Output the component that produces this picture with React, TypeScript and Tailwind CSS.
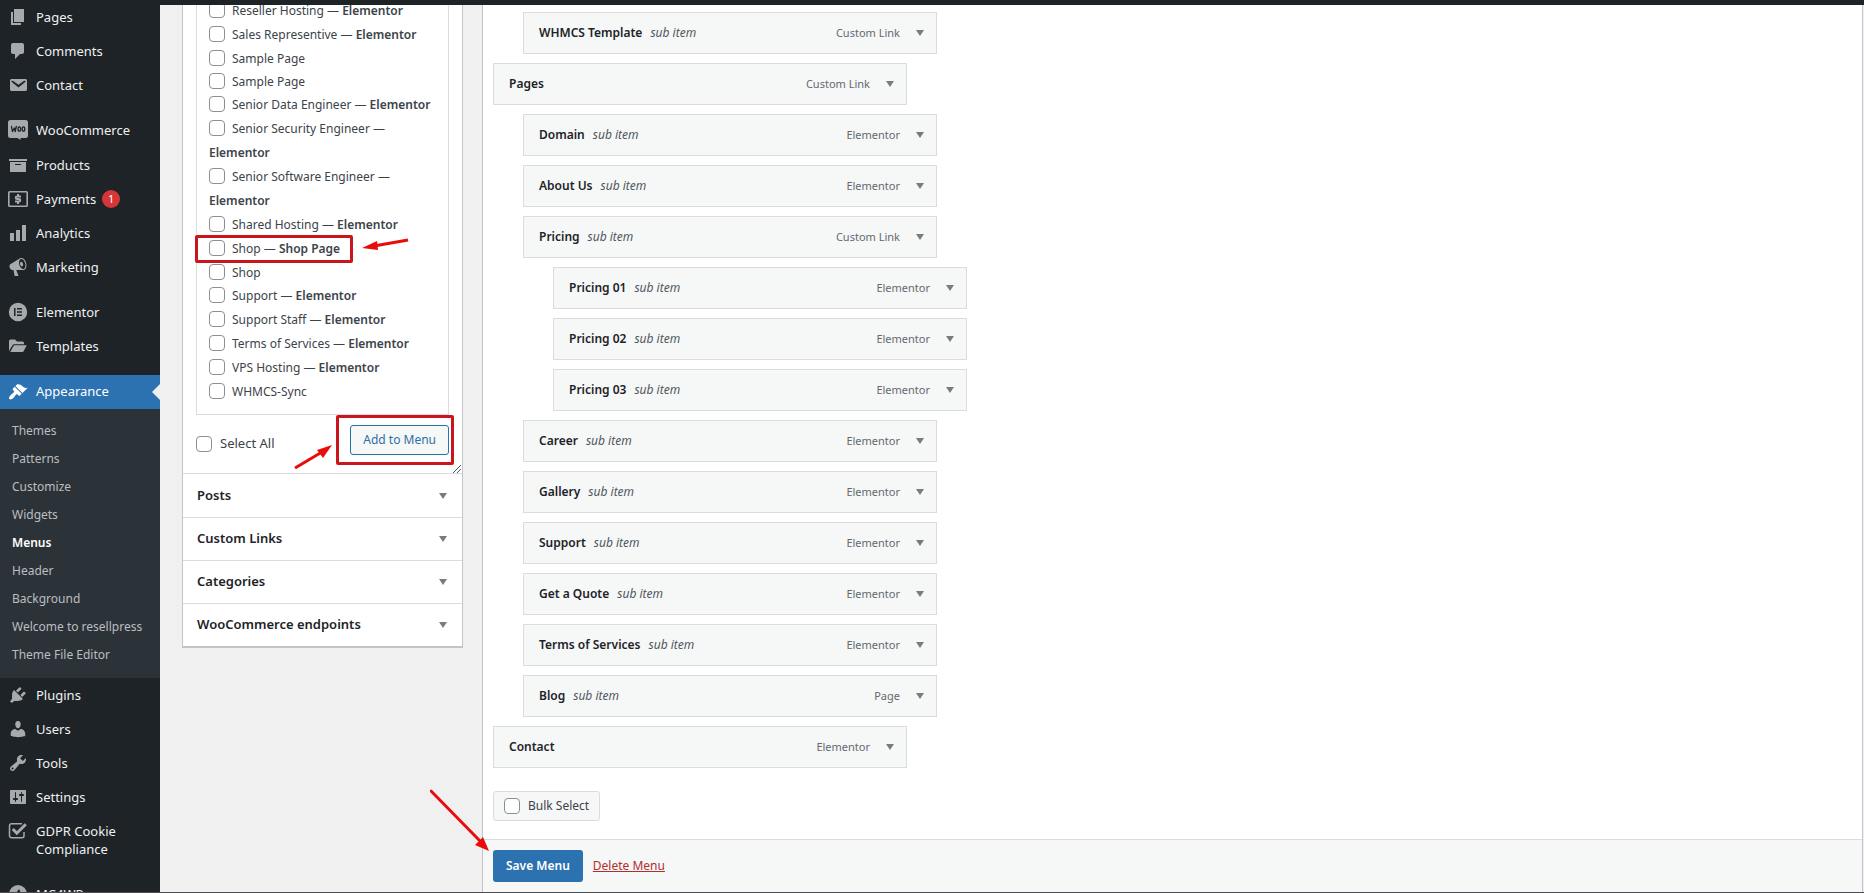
import React from 'react';

interface SidebarEntry {
  label: string;
  icon: React.ReactNode;
  badge?: number;
}

interface PageEntry {
  title: string;
  state?: string;
  marked?: boolean;
}

interface MenuEntry {
  title: string;
  type: string;
  depth: 0 | 1 | 2;
}

const Dashicon: React.FC<{ d: string }> = ({ d }) => (
  <svg viewBox="0 0 20 20" className="w-5 h-5" fill="currentColor" aria-hidden="true">
    <path d={d} />
  </svg>
);

const WooIcon = () => (
  <svg viewBox="0 0 20 20" className="w-5 h-5" aria-hidden="true">
    <path
      fill="currentColor"
      d="M2.500 0h15A2.500 2.500 0 0 1 20 2.500v13a2.500 2.500 0 0 1-2.500 2.500H12.500v2L9.500 18h-7A2.500 2.500 0 0 1 0 15.500v-13A2.500 2.500 0 0 1 2.500 0z"
    />
    <g fill="none" stroke="#1d2327" strokeWidth="1.300" strokeLinecap="round" strokeLinejoin="round">
      <path d="M3.500 6.500l.9 5 1.900-3.500.9 3.500 1.100-5" />
      <ellipse cx="11.300" cy="9" rx="1.300" ry="2.200" />
      <ellipse cx="15.500" cy="9" rx="1.300" ry="2.200" />
    </g>
  </svg>
);

const PaymentsIcon = () => (
  <svg viewBox="0 0 20 20" className="w-5 h-5" fill="none" stroke="currentColor" aria-hidden="true">
    <rect x="0.800" y="2.800" width="18.400" height="14.400" rx="0.800" strokeWidth="1.600" />
    <path strokeWidth="2" d="M13 7.500H9a1.250 1.250 0 0 0 0 2.500h2a1.250 1.250 0 0 1 0 2.500H7M10 5v2.500M10 12.500V15" />
  </svg>
);

const ElementorIcon = () => (
  <svg viewBox="0 0 20 20" className="w-5 h-5" aria-hidden="true">
    <circle cx="10" cy="10" r="9.200" fill="currentColor" />
    <path fill="#1d2327" d="M6 6h1.500v8H6zM9 6h5v1.500H9zM9 9.250h5v1.500H9zM9 12.500h5V14H9z" />
  </svg>
);

const FolderIcon = () => (
  <svg viewBox="0 0 20 20" className="w-5 h-5" fill="currentColor" aria-hidden="true">
    <path d="M1 5a1.500 1.500 0 0 1 1.500-1.500h4.500l2 2h5.500A1.500 1.500 0 0 1 16 7v1.300H6.200a2 2 0 0 0-1.700 1L1 15z" />
    <path d="M6.500 9.300h12.300l-3.200 6a1.500 1.500 0 0 1-1.300.8H2.200l3.300-6.200a1.200 1.200 0 0 1 1-.6z" />
  </svg>
);

const ConsentIcon = () => (
  <svg viewBox="0 0 20 20" className="w-5 h-5" fill="none" stroke="currentColor" aria-hidden="true">
    <path strokeWidth="1.500" d="M14 2.700H3.500A2 2 0 0 0 1.500 4.700v10a2 2 0 0 0 2 2h10.500a2 2 0 0 0 2-2V11" />
    <path strokeWidth="3" d="M4.800 8l4 4.200L17.800 3.200" />
  </svg>
);

const MailchimpIcon = () => (
  <svg viewBox="0 0 20 20" className="w-5 h-5" aria-hidden="true">
    <circle cx="10" cy="10" r="9" fill="currentColor" />
    <path fill="#1d2327" d="M11 5l2 4-3 6-2-6z" />
  </svg>
);

const contentEntries: SidebarEntry[] = [
  { label: 'Pages', icon: <Dashicon d="M6 15V2h10v13H6zm-1 1h8v2H3V5h2v11z" /> },
  {
    label: 'Comments',
    icon: <Dashicon d="M5 2h9c1.100 0 2 .9 2 2v7c0 1.100-.9 2-2 2h-2l-5 5v-5H5c-1.100 0-2-.9-2-2V4c0-1.100.9-2 2-2z" />,
  },
  {
    label: 'Contact',
    icon: (
      <Dashicon d="M3.870 4h13.250C18.370 4 19 4.590 19 5.790v8.420c0 1.190-.63 1.790-1.880 1.790H3.870c-1.250 0-1.880-.6-1.880-1.790V5.790c0-1.200.63-1.790 1.880-1.790zm6.620 8.600l6.740-5.530c.24-.2.43-.66.13-1.070-.29-.41-.82-.42-1.170-.17l-5.700 3.860L4.800 5.830c-.35-.25-.88-.24-1.170.17-.3.41-.11.87.13 1.070z" />
    ),
  },
];

const commerceEntries: SidebarEntry[] = [
  { label: 'Products', icon: <Dashicon d="M19 4v2H1V4h18zM2 7h16v10H2V7zm11 3V9H7v1h6z" /> },
  { label: 'Payments', icon: <PaymentsIcon />, badge: 1 },
  { label: 'Analytics', icon: <Dashicon d="M18 18V2h-4v16h4zm-6 0V7H8v11h4zm-6 0v-8H2v8h4z" /> },
  {
    label: 'Marketing',
    icon: (
      <Dashicon d="M18.150 5.940c.46 1.620.38 3.220-.02 4.480-.42 1.280-1.260 2.180-2.300 2.480-.16.06-.26.06-.4.06-.06.02-.12.02-.18.02-.06.02-.14.02-.22.02h-6.800l2.220 5.500c.02.14-.06.26-.14.34-.08.1-.24.16-.34.16H6.950c-.1 0-.26-.06-.34-.16-.08-.08-.16-.2-.14-.34l-1-5.500H4.250l-.02-.02c-.5.06-1.080-.18-1.540-.62s-.88-1.080-1.060-1.880c-.24-.8-.2-1.560-.02-2.200.18-.62.58-1.080 1.060-1.300l.02-.02 9-5.400c.1-.06.18-.1.24-.16.06-.04.14-.08.24-.12.16-.08.28-.12.5-.18 1.040-.3 2.240.1 3.220.98s1.840 2.240 2.260 3.860zm-2.580 5.980h-.02c.4-.1.74-.34 1.040-.7.58-.7.86-1.760.86-3.040 0-.64-.1-1.300-.28-1.980-.34-1.360-1.020-2.500-1.780-3.240s-1.680-1.100-2.460-.88c-.82.22-1.400.96-1.700 2-.32 1.040-.28 2.360.06 3.720.38 1.360 1 2.500 1.800 3.240.78.74 1.620 1.100 2.480.88zm-2.540-7.080c.22-.04.42-.02.62.04.38.16.76.48 1.020 1s.42 1.200.42 1.780c0 .3-.04.56-.12.8-.18.48-.44.84-.86.94-.34.1-.8-.06-1.140-.4s-.64-.86-.78-1.500c-.18-.62-.12-1.240.02-1.720s.48-.84.82-.94z" />
    ),
  },
];

const builderEntries: SidebarEntry[] = [
  { label: 'Elementor', icon: <ElementorIcon /> },
  { label: 'Templates', icon: <FolderIcon /> },
];

const appearanceLinks = [
  'Themes',
  'Patterns',
  'Customize',
  'Widgets',
  'Menus',
  'Header',
  'Background',
  'Welcome to resellpress',
  'Theme File Editor',
];

const adminEntries: SidebarEntry[] = [
  {
    label: 'Plugins',
    icon: (
      <Dashicon d="M13.110 4.360L9.870 7.600 8 5.730l3.240-3.240c.35-.34 1.050-.2 1.560.32.52.51.66 1.210.31 1.550zm-8 1.770l.91-1.120 9.010 9.010-1.190.84c-.71.71-2.630 1.160-3.820 1.160H6.140L4.900 17.260c-.59.59-1.540.59-2.120 0-.59-.58-.59-1.530 0-2.120l1.240-1.240v-3.880c0-1.130.4-3.190 1.090-3.890zm7.260 3.970l3.240-3.240c.34-.35 1.040-.21 1.550.31.52.51.66 1.210.31 1.550l-3.240 3.250z" />
    ),
  },
  {
    label: 'Users',
    icon: (
      <Dashicon d="M10 9.250c-2.270 0-2.730-3.440-2.730-3.440C7 4.020 7.820 2 9.970 2c2.160 0 2.980 2.020 2.710 3.810 0 0-.41 3.440-2.680 3.440zm0 2.570L12.720 10c2.390 0 4.520 2.330 4.520 4.530v2.490s-3.650 1.130-7.240 1.130c-3.650 0-7.240-1.130-7.240-1.130v-2.490c0-2.250 1.940-4.480 4.470-4.480z" />
    ),
  },
  {
    label: 'Tools',
    icon: (
      <Dashicon d="M16.680 9.770c-1.340 1.340-3.300 1.670-4.950.99l-5.410 6.520c-.99.99-2.590.99-3.580 0s-.99-2.590 0-3.570l6.520-5.420c-.68-1.650-.35-3.610.99-4.950 1.280-1.280 3.120-1.620 4.720-1.060l-2.890 2.890 2.820 2.820 2.860-2.870c.53 1.580.18 3.390-1.080 4.650zM3.810 16.210c.4.39 1.040.39 1.430 0 .4-.4.4-1.040 0-1.430-.39-.4-1.030-.4-1.430 0-.39.39-.39 1.030 0 1.430z" />
    ),
  },
  {
    label: 'Settings',
    icon: (
      <Dashicon d="M18 16V4c0-.55-.45-1-1-1H3c-.55 0-1 .45-1 1v12c0 .55.45 1 1 1h14c.55 0 1-.45 1-1zM8 11h1c.55 0 1 .45 1 1s-.45 1-1 1H8v1.500c0 .28-.22.5-.5.5s-.5-.22-.5-.5V13H6c-.55 0-1-.45-1-1s.45-1 1-1h1V5.500c0-.28.22-.5.5-.5s.5.22.5.5V11zm5-2h-1c-.55 0-1-.45-1-1s.45-1 1-1h1V5.500c0-.28.22-.5.5-.5s.5.22.5.5V7h1c.55 0 1 .45 1 1s-.45 1-1 1h-1v5.500c0 .28-.22.5-.5.5s-.5-.22-.5-.5V9z" />
    ),
  },
  { label: 'GDPR Cookie Compliance', icon: <ConsentIcon /> },
];

const pageEntries: PageEntry[] = [
  { title: 'Reseller Hosting', state: 'Elementor' },
  { title: 'Sales Representive', state: 'Elementor' },
  { title: 'Sample Page' },
  { title: 'Sample Page' },
  { title: 'Senior Data Engineer', state: 'Elementor' },
  { title: 'Senior Security Engineer', state: 'Elementor' },
  { title: 'Senior Software Engineer', state: 'Elementor' },
  { title: 'Shared Hosting', state: 'Elementor' },
  { title: 'Shop', state: 'Shop Page', marked: true },
  { title: 'Shop' },
  { title: 'Support', state: 'Elementor' },
  { title: 'Support Staff', state: 'Elementor' },
  { title: 'Terms of Services', state: 'Elementor' },
  { title: 'VPS Hosting', state: 'Elementor' },
  { title: 'WHMCS-Sync' },
];

const accordionTitles = ['Posts', 'Custom Links', 'Categories', 'WooCommerce endpoints'];

const menuEntries: MenuEntry[] = [
  { title: 'WHMCS Template', type: 'Custom Link', depth: 1 },
  { title: 'Pages', type: 'Custom Link', depth: 0 },
  { title: 'Domain', type: 'Elementor', depth: 1 },
  { title: 'About Us', type: 'Elementor', depth: 1 },
  { title: 'Pricing', type: 'Custom Link', depth: 1 },
  { title: 'Pricing 01', type: 'Elementor', depth: 2 },
  { title: 'Pricing 02', type: 'Elementor', depth: 2 },
  { title: 'Pricing 03', type: 'Elementor', depth: 2 },
  { title: 'Career', type: 'Elementor', depth: 1 },
  { title: 'Gallery', type: 'Elementor', depth: 1 },
  { title: 'Support', type: 'Elementor', depth: 1 },
  { title: 'Get a Quote', type: 'Elementor', depth: 1 },
  { title: 'Terms of Services', type: 'Elementor', depth: 1 },
  { title: 'Blog', type: 'Page', depth: 1 },
  { title: 'Contact', type: 'Elementor', depth: 0 },
];

const depthClass = {
  0: '',
  1: 'ml-[30px]',
  2: 'ml-[60px]',
};

const checkboxClass =
  'appearance-none shrink-0 w-4 h-4 bg-white border border-[#8c8f94] rounded-[4px] checked:bg-[#2271b1]';

const DownArrow = () => (
  <svg viewBox="0 0 8 6" className="w-2 h-1.5 shrink-0" fill="#787c82" aria-hidden="true">
    <path d="M0 0h8L4 6z" />
  </svg>
);

const SidebarItem: React.FC<{ entry: SidebarEntry }> = ({ entry }) => (
  <li>
    <a href="#" className="flex items-start min-h-[34px] py-2 pr-2 text-[13px] leading-[18px] text-[#f0f0f1]">
      <span className="flex justify-center items-center w-9 h-[18px] shrink-0 text-[#a7aaad]">{entry.icon}</span>
      <span>{entry.label}</span>
      {entry.badge && (
        <span className="flex items-center justify-center w-[18px] h-[18px] ml-1.5 rounded-full bg-[#d63638] text-[11px] text-white">
          {entry.badge}
        </span>
      )}
    </a>
  </li>
);

const SidebarGroup: React.FC<{ entries: SidebarEntry[]; className?: string }> = ({ entries, className = '' }) => (
  <ul className={className}>
    {entries.map((entry) => (
      <SidebarItem key={entry.label} entry={entry} />
    ))}
  </ul>
);

const Sidebar = () => (
  <nav className="w-40 shrink-0 bg-[#1d2327]">
    <SidebarGroup entries={contentEntries} />
    <SidebarGroup entries={[{ label: 'WooCommerce', icon: <WooIcon /> }]} className="mt-[11px] mb-px" />
    <SidebarGroup entries={commerceEntries} />
    <SidebarGroup entries={builderEntries} className="mt-[11px]" />

    <div className="mt-3">
      <a href="#" className="relative flex items-center h-[34px] bg-[#2c71b0] text-[13px] text-white">
        <span className="flex justify-center w-9">
          <Dashicon d="M14.480 11.060L7.410 3.990l1.500-1.500c.5-.56 2.300-.47 3.510.32 1.210.8 1.430 1.280 2.910 2.100 1.180.64 2.450 1.260 4.450.85zm-.71.71L6.700 4.700 4.930 6.470c-.39.39-.39 1.020 0 1.410l1.060 1.060c.39.39.39 1.030 0 1.420-.6.6-1.430 1.110-2.210 1.690-.35.26-.7.53-1.010.84C1.430 14.230.4 16.080 1.400 17.070c.99 1 2.840-.03 4.180-1.360.31-.31.58-.66.85-1.020.57-.78 1.080-1.610 1.690-2.210.39-.39 1.020-.39 1.410 0l1.060 1.060c.39.39 1.020.39 1.410 0z" />
        </span>
        Appearance
        <span className="absolute right-0 top-[9px] border-y-8 border-r-8 border-y-transparent border-r-[#f0f0f1]" />
      </a>
      <ul className="pt-2 pb-[9px] bg-[#2c3338]">
        {appearanceLinks.map((label) => (
          <li key={label}>
            <a
              href="#"
              className={`block pl-3 text-xs leading-7 whitespace-nowrap ${
                label === 'Menus' ? 'font-semibold text-white' : 'text-[#bbbec1]'
              }`}
            >
              {label}
            </a>
          </li>
        ))}
      </ul>
    </div>

    <SidebarGroup entries={adminEntries} />
    <SidebarGroup entries={[{ label: 'MC4WP', icon: <MailchimpIcon /> }]} className="mt-[11px]" />
  </nav>
);

const PagePicker = () => (
  <div className="relative px-[13px] pb-[18px] border-b border-[#dcdcde]">
    <ul className="pl-3 pr-2 pb-[11px] border-x border-b border-[#dcdcde] text-xs text-[#3c434a]">
      {pageEntries.map((page, index) => (
        <li key={index} className={`relative ${page.state ? 'leading-6' : 'leading-[23px]'}`}>
          <label>
            <input type="checkbox" className={`${checkboxClass} inline-block align-middle mr-[7px] mb-[3px]`} />
            {page.title}
            {page.state && (
              <>
                {' — '}
                <span className="font-semibold">{page.state}</span>
              </>
            )}
          </label>
          {page.marked && (
            <>
              <span className="absolute -left-3.5 -top-0.5 w-[158px] h-7 border-3 border-[#c9151b] rounded-xs" />
              <svg className="absolute left-[153px] top-0 w-12 h-4" viewBox="0 0 48 16" aria-hidden="true">
                <path d="M46 3L12 9" stroke="#e80c0a" strokeWidth="3" />
                <path d="M0 11L15 4l1 9z" fill="#e80c0a" />
              </svg>
            </>
          )}
        </li>
      ))}
    </ul>

    <div className="flex items-center justify-between pt-2.5">
      <label className="flex items-center gap-2 mt-2 text-[13px] text-[#3c434a]">
        <input type="checkbox" className={checkboxClass} />
        Select All
      </label>
      <div className="relative">
        <button className="h-[30px] px-3 border border-[#2271b1] rounded-[3px] bg-[#f6f7f7] text-xs text-[#2c6fa8]">
          Add to Menu
        </button>
        <span className="absolute -left-3.5 -right-[5px] -top-2.5 -bottom-2.5 border-3 border-[#c9151b] rounded-xs pointer-events-none" />
        <svg className="absolute -left-14 top-5 w-[38px] h-6" viewBox="0 0 38 24" aria-hidden="true">
          <path d="M1 23L28 7" stroke="#e80c0a" strokeWidth="3" />
          <path d="M38 0L23 5l6 8z" fill="#e80c0a" />
        </svg>
      </div>
    </div>

    <svg className="absolute right-px bottom-0 w-2 h-2" viewBox="0 0 8 8" stroke="#50575e" aria-hidden="true">
      <path d="M0 8L8 0M4 8L8 4" />
    </svg>
  </div>
);

const AddItemsPanel = () => (
  <section className="w-[281px] -mt-1.5 shrink-0 self-start ml-[22px] bg-white border border-t-0 border-b-2 border-[#c3c4c7]">
    <PagePicker />
    {accordionTitles.map((title, index) => (
      <button
        key={title}
        className={`flex items-center justify-between w-full h-[43px] pl-3.5 pr-[15px] text-[13px] font-semibold text-[#1d2327] ${
          index > 0 ? 'border-t border-[#dcdcde]' : ''
        }`}
      >
        {title}
        <DownArrow />
      </button>
    ))}
  </section>
);

const MenuRow: React.FC<{ entry: MenuEntry }> = ({ entry }) => (
  <li
    className={`flex items-center w-[414px] h-[42px] pl-[15px] pr-3 border border-[#dcdcde] bg-[#f6f7f7] text-xs ${depthClass[entry.depth]}`}
  >
    <span className="font-semibold text-[#1d2327]">{entry.title}</span>
    {entry.depth > 0 && <span className="ml-2 italic text-[#50575e]">sub item</span>}
    <span className="ml-auto mr-4 text-[11px] text-[#646970]">{entry.type}</span>
    <button aria-label={`Edit ${entry.title}`}>
      <DownArrow />
    </button>
  </li>
);

const MenuEditor = () => (
  <section className="flex flex-col grow ml-[19px] mr-px bg-white border-x border-[#c3c4c7]">
    <ul className="flex flex-col gap-[9px] pt-[7px] pl-2.5">
      {menuEntries.map((entry, index) => (
        <MenuRow key={index} entry={entry} />
      ))}
    </ul>

    <label className="flex items-center gap-2 self-start h-[30px] mt-[23px] ml-2.5 px-2.5 border border-[#dcdcde] rounded-[3px] bg-[#f6f7f7] text-xs text-[#3c434a]">
      <input type="checkbox" className={checkboxClass} />
      Bulk Select
    </label>

    <footer className="relative flex items-start gap-2.5 grow mt-[18px] pt-2.5 pl-2.5 border-t border-[#dcdcde] bg-[#f6f7f7]">
      <button className="h-8 px-[13px] rounded-[3px] bg-[#2c71b0] text-xs font-semibold text-white">Save Menu</button>
      <a href="#" className="text-xs leading-8 text-[#b32d2e] underline">
        Delete Menu
      </a>
      <svg className="absolute -left-[53px] -top-[51px] w-[60px] h-[62px]" viewBox="0 0 60 62" aria-hidden="true">
        <path d="M1 2L50 52" stroke="#e80c0a" strokeWidth="3" strokeLinecap="round" />
        <path d="M59 62L45 56l8-8z" fill="#e80c0a" />
      </svg>
    </footer>
  </section>
);

export default function App() {
  return (
    <div className="relative flex h-screen overflow-hidden bg-[#f0f0f1] font-['Noto_Sans','Open_Sans',sans-serif]">
      <Sidebar />
      <div className="flex flex-col grow">
        <div className="relative z-10 h-[5px] shrink-0 bg-[#1d2327]" />
        <main className="flex grow min-h-0">
          <AddItemsPanel />
          <MenuEditor />
        </main>
      </div>
      <div className="absolute inset-x-0 bottom-0 h-px bg-[#4b4d50]" />
    </div>
  );
}
